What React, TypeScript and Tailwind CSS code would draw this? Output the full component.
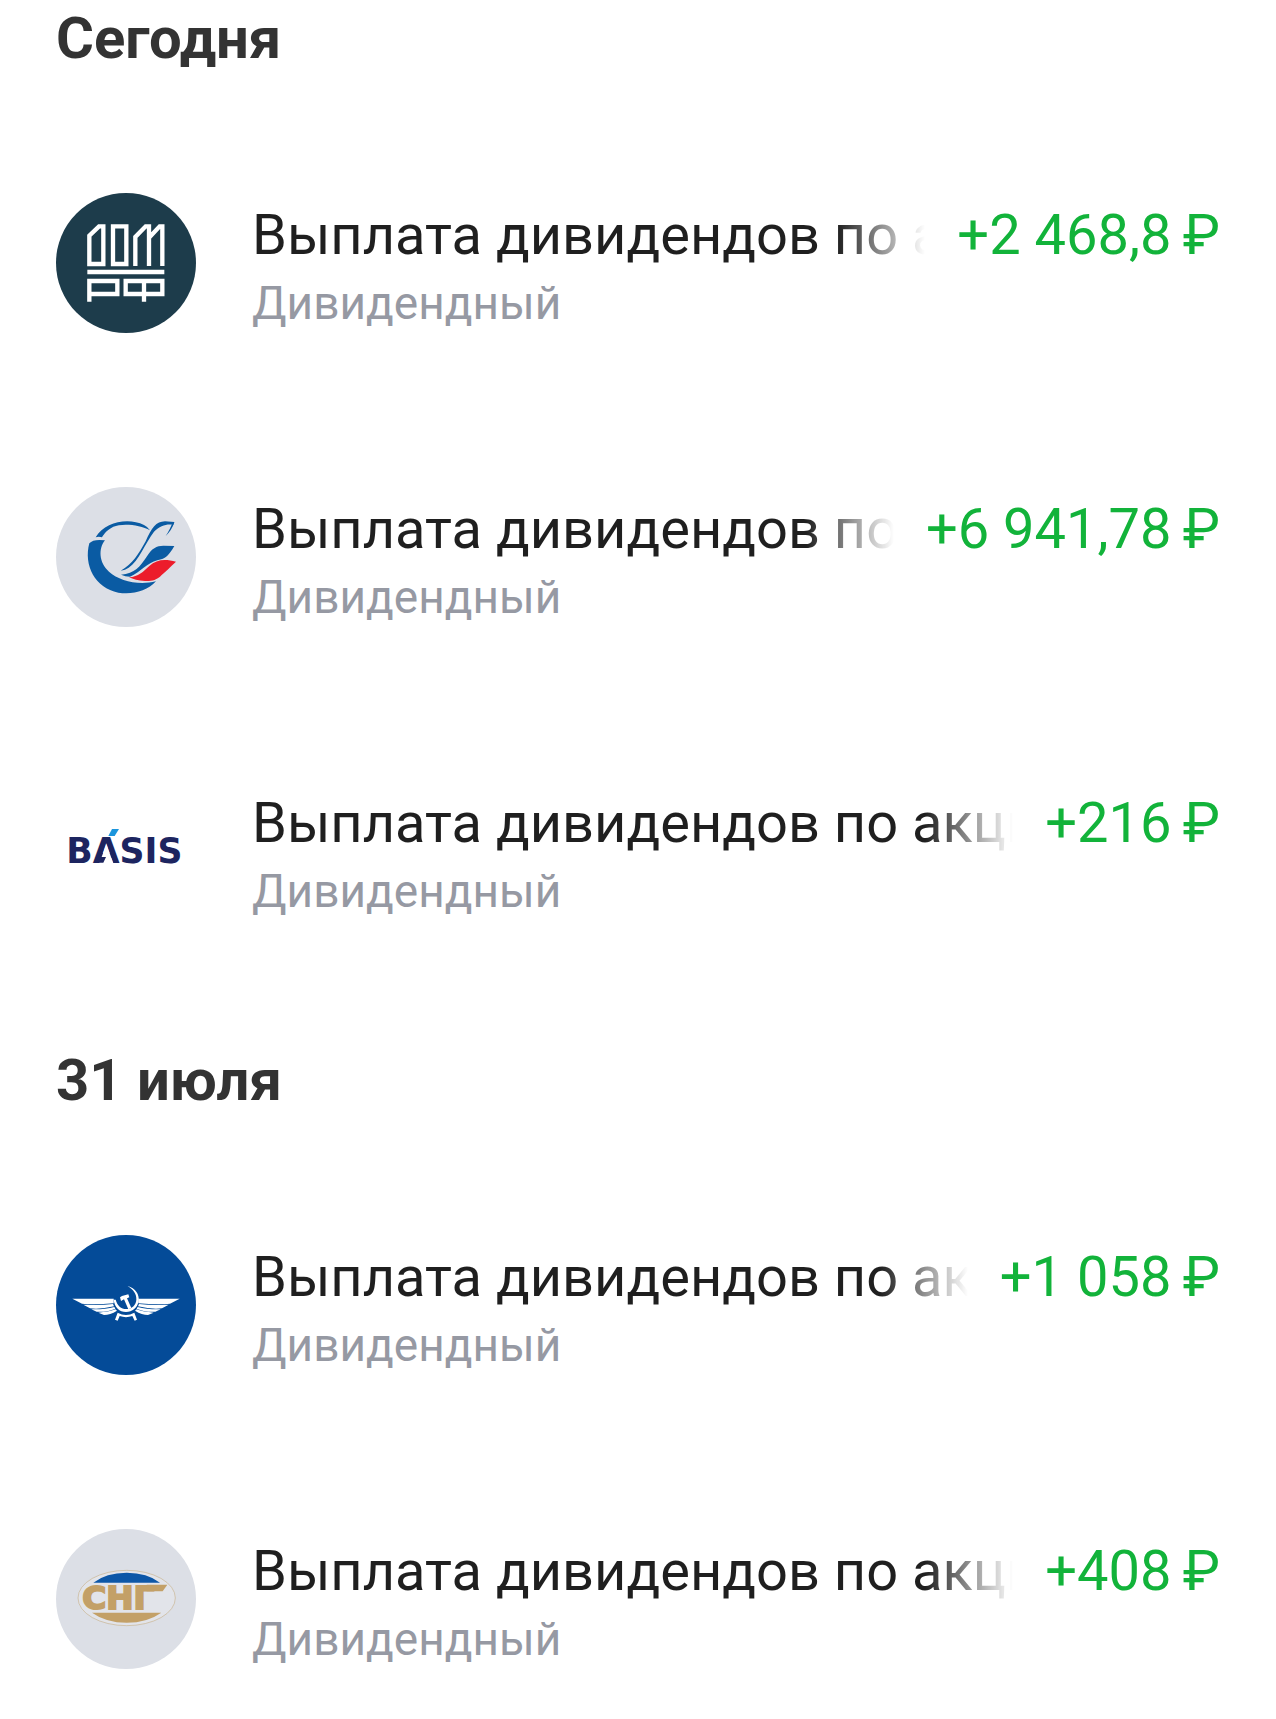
import type { ReactNode } from "react";

type Operation = {
  id: number;
  title: string;
  account: string;
  amount: string;
  logo: ReactNode;
};

type Group = {
  date: string;
  operations: Operation[];
};

function DomRfLogo() {
  return (
    <svg viewBox="18 21 420 420" className="size-full bg-[#1d3c4b]" role="img" aria-label="ДОМ.РФ">
      <g fill="none" stroke="#fff" strokeWidth="13">
        <path d="M118 234V149L147 121H160V234Z" />
        <path d="M189 121H229V234H189Z" />
        <path d="M256 240V153L287 121H297V240M297 155L329 121H337V240" />
        <path d="M112 258H343" />
        <path d="M118 347V285H202V324H118" />
        <path d="M227 285H337V324H227ZM282 285V347" />
      </g>
    </svg>
  );
}

function TransneftLogo() {
  return (
    <svg viewBox="18 21 420 420" className="size-full bg-[#dcdfe6]" role="img" aria-label="Логотип">
      <g fill="#0a5ba3">
        <path d="M137 172C165 125 235 112 282 135Q294 141 300 151C270 133 215 129 190 140C172 149 162 161 156 172Q146 168 137 172Z" />
        <path d="M118 190Q130 176 165 181C145 205 146 248 177 275C208 303 265 317 318 304C292 334 245 345 205 338C135 325 100 255 118 190Z" />
        <path d="M212 272C248 252 266 222 287 184C305 143 318 125 345 124L373 126L370 134C350 131 330 136 312 155C286 188 266 244 236 263Q226 270 212 272Z" />
        <path d="M373 127Q366 150 347 168Q361 146 366 131Z" />
        <path d="M213 284C255 280 270 260 290 230C305 205 320 197 340 197L373 198C357 225 348 236 322 241C292 248 272 276 240 290Q226 290 213 284Z" />
      </g>
      <path
        fill="#ec1c2b"
        d="M237 292C265 290 280 275 298 258C320 238 345 236 378 245C360 262 350 272 335 285C320 302 300 304 285 303Q255 301 237 292Z"
      />
    </svg>
  );
}

function BasisLogo() {
  return (
    <svg viewBox="18 21 420 420" className="size-full bg-white" role="img" aria-label="BASIS">
      <text x="49" y="266" fill="#1d2560" className="font-['DejaVu_Sans',sans-serif] text-[104px] font-bold">
        BASIS
      </text>
      <path fill="#fff" d="M169 211L190 268H148Z" />
      <path fill="#1d2560" d="M138 249H168L160 266H133Z" />
      <path fill="#1b95dc" d="M186 165H207L194 186H175Z" />
    </svg>
  );
}

function AeroflotWing() {
  return (
    <>
      <path d="M67 212H191V226Q130 231 96 227Z" />
      <path d="M100 230Q150 233 189 228L192 235Q150 245 120 241Z" />
      <path d="M124 244Q165 245 193 237L196 242Q165 254 140 251Z" />
      <path d="M145 254Q175 252 196 244L201 248Q180 261 162 261Z" />
    </>
  );
}

function AeroflotLogo() {
  return (
    <svg viewBox="18 21 420 420" className="size-full bg-[#044b98]" role="img" aria-label="Аэрофлот">
      <g fill="#fff">
        <AeroflotWing />
        <g transform="matrix(-1 0 0 1 456 0)">
          <AeroflotWing />
        </g>
        <path d="M232 173C257 181 269 199 266 220C262 240 247 252 228 252C208 252 194 238 191 215H197C202 233 213 243 229 243C246 243 258 231 259 215C260 197 250 184 232 173Z" />
        <path d="M210 208L216 204L235 199L238 208L231 211L244 240L235 244L222 214L213 219Z" />
        <path d="M203 254Q228 268 253 254L261 275L254 278L247 264Q228 271 209 264L203 278L195 275Z" />
      </g>
    </svg>
  );
}

function SurgutLogo() {
  return (
    <svg viewBox="18 21 420 420" className="size-full bg-[#dcdfe6]" role="img" aria-label="СНГ">
      <ellipse cx="230" cy="228" rx="146" ry="83" fill="#e2e4ea" stroke="#c9b48f" strokeWidth="2" />
      <path fill="#0d57a7" d="M130 182Q168 152 230 152Q292 152 330 182Z" />
      <path fill="#c3a067" d="M126 272H334Q292 302 230 302Q168 302 126 272Z" />
      <text
        x="97"
        y="262"
        fill="#c3a067"
        stroke="#c3a067"
        strokeWidth="6"
        className="font-['DejaVu_Sans',sans-serif] text-[98px] font-bold"
      >
        СНГ
      </text>
      <path fill="#c3a067" d="M290 188H352L338 208H290Z" />
    </svg>
  );
}

const groups: Group[] = [
  {
    date: "Сегодня",
    operations: [
      {
        id: 1,
        title: "Выплата дивидендов по акциям",
        account: "Дивидендный",
        amount: "+2 468,8\u2009₽",
        logo: <DomRfLogo />,
      },
      {
        id: 2,
        title: "Выплата дивидендов по акциям",
        account: "Дивидендный",
        amount: "+6 941,78\u2009₽",
        logo: <TransneftLogo />,
      },
      {
        id: 3,
        title: "Выплата дивидендов по акциям",
        account: "Дивидендный",
        amount: "+216\u2009₽",
        logo: <BasisLogo />,
      },
    ],
  },
  {
    date: "31 июля",
    operations: [
      {
        id: 4,
        title: "Выплата дивидендов по акциям",
        account: "Дивидендный",
        amount: "+1 058\u2009₽",
        logo: <AeroflotLogo />,
      },
      {
        id: 5,
        title: "Выплата дивидендов по акциям",
        account: "Дивидендный",
        amount: "+408\u2009₽",
        logo: <SurgutLogo />,
      },
    ],
  },
];

function OperationRow({ operation }: { operation: Operation }) {
  return (
    <li className="flex items-start gap-14">
      <div className="size-[140px] shrink-0 overflow-hidden rounded-full">{operation.logo}</div>
      <div className="min-w-0 flex-1 pt-[6px]">
        <div className="flex gap-8 text-[56px] leading-[72px]">
          {/* длинное название плавно исчезает перед суммой */}
          <p className="min-w-0 flex-1 overflow-hidden whitespace-nowrap text-[#1f1f1f] [mask-image:linear-gradient(to_right,#000_calc(100%-88px),transparent)]">
            {operation.title}
          </p>
          <p className="shrink-0 whitespace-nowrap text-[#12b33a]">{operation.amount}</p>
        </div>
        <p className="text-[46px] leading-[64px] text-[#9699a3]">{operation.account}</p>
      </div>
    </li>
  );
}

export default function App() {
  return (
    <main className="flex flex-col gap-[125px] bg-white px-14 pt-[6px] pb-12 font-[Roboto,'Noto_Sans',sans-serif]">
      {groups.map((group) => (
        <section key={group.date}>
          <h2 className="mb-[123px] text-[58px] leading-[64px] font-bold text-[#333333]">{group.date}</h2>
          <ul className="flex flex-col gap-[152px]">
            {group.operations.map((operation) => (
              <OperationRow key={operation.id} operation={operation} />
            ))}
          </ul>
        </section>
      ))}
    </main>
  );
}
